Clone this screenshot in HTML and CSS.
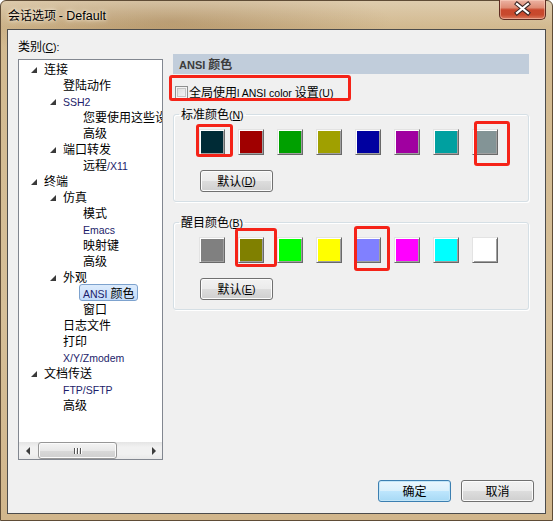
FILE: index.html
```html
<!DOCTYPE html>
<html lang="zh-CN">
<head>
<meta charset="utf-8">
<title>会话选项 - Default</title>
<link rel="stylesheet" href="styles.css">
</head>
<body>
<div class="win">
  <div class="titlebar">
    <span class="title">会话选项 <span class="lt">- Default</span></span>
    <div class="close">
      <svg width="47" height="20" viewBox="0 0 47 20">
        <path d="M18 5 L29 14 M29 5 L18 14" stroke="#3b2624" stroke-width="4.2" stroke-linecap="square" fill="none"/>
        <path d="M18 5 L29 14 M29 5 L18 14" stroke="#ffffff" stroke-width="2.2" stroke-linecap="square" fill="none"/>
      </svg>
    </div>
  </div>
  <div class="client">
    <div class="main">
      <div class="left">
        <div class="cat">类别<span class="l">(<u>C</u>):</span></div>
        <div class="tree">
          <ul class="items">
            <li class="row lv0 open"><span class="tw"></span>连接</li>
            <li class="row lv1">登陆动作</li>
            <li class="row lv1 open"><span class="tw"></span><span class="l nv">SSH2</span></li>
            <li class="row lv2">您要使用这些设置吗</li>
            <li class="row lv2">高级</li>
            <li class="row lv1 open"><span class="tw"></span>端口转发</li>
            <li class="row lv2">远程<span class="l nv">/X11</span></li>
            <li class="row lv0 open"><span class="tw"></span>终端</li>
            <li class="row lv1 open"><span class="tw"></span>仿真</li>
            <li class="row lv2">模式</li>
            <li class="row lv2"><span class="l nv">Emacs</span></li>
            <li class="row lv2">映射键</li>
            <li class="row lv2">高级</li>
            <li class="row lv1 open"><span class="tw"></span>外观</li>
            <li class="row lv2"><span class="sel"><span class="l nv">ANSI </span>颜色</span></li>
            <li class="row lv2">窗口</li>
            <li class="row lv1">日志文件</li>
            <li class="row lv1">打印</li>
            <li class="row lv1"><span class="l nv">X/Y/Zmodem</span></li>
            <li class="row lv0 open"><span class="tw"></span>文档传送</li>
            <li class="row lv1"><span class="l nv">FTP/SFTP</span></li>
            <li class="row lv1">高级</li>
          </ul>
          <div class="hscroll">
            <div class="sbtn"><span class="arr-l"></span></div>
            <div class="track">
              <div class="thumb"><span class="grip"></span><span class="grip"></span><span class="grip"></span></div>
            </div>
            <div class="sbtn"><span class="arr-r"></span></div>
          </div>
        </div>
      </div>
      <div class="right">
        <div class="header"><span class="lb">ANSI </span>颜色</div>
        <div class="check"><span class="cbox"></span><span class="ctext">全局使用<span class="l">l ANSI color </span>设置<span class="l">(<u>U</u>)</span></span></div>
        <fieldset class="group">
          <legend>标准颜色<span class="l">(<u>N</u>)</span></legend>
          <div class="swatches">
            <span class="sw c1"></span><span class="sw c2"></span><span class="sw c3"></span><span class="sw c4"></span>
            <span class="sw c5"></span><span class="sw c6"></span><span class="sw c7"></span><span class="sw c8"></span>
          </div>
          <button class="btn def">默认<span class="l">(<u>D</u>)</span></button>
        </fieldset>
        <fieldset class="group second">
          <legend>醒目颜色<span class="l">(<u>B</u>)</span></legend>
          <div class="swatches">
            <span class="sw b1"></span><span class="sw b2"></span><span class="sw b3"></span><span class="sw b4"></span>
            <span class="sw b5"></span><span class="sw b6"></span><span class="sw b7"></span><span class="sw b8"></span>
          </div>
          <button class="btn def">默认<span class="l">(<u>E</u>)</span></button>
        </fieldset>
      </div>
    </div>
    <div class="actions">
      <button class="btn primary">确定</button>
      <button class="btn">取消</button>
    </div>
  </div>
  <div class="mark m1"></div>
  <div class="mark m2"></div>
  <div class="mark m3"></div>
  <div class="mark m4"></div>
  <div class="mark m5"></div>
</div>
</body>
</html>
```

FILE: styles.css
```css
* { box-sizing: border-box; }
html, body { margin: 0; padding: 0; }
body {
  width: 553px;
  height: 521px;
  overflow: hidden;
  background: #ffffff;
  font-family: "Noto Sans CJK SC", sans-serif;
  font-size: 12px;
  color: #000;
}
.l { font-family: "Liberation Sans", Arial, "Noto Sans CJK SC", sans-serif; font-size: 10.5px; }
.nv { color: #1c1c6a; }
u { text-decoration: underline; }

.win {
  position: relative;
  width: 553px;
  height: 521px;
  display: flex;
  flex-direction: column;
  padding: 0 6px 6px 6px;
  border: 1px solid #5f4c36;
  border-radius: 6px 6px 0 0;
  background:
    linear-gradient(180deg, rgba(255,255,255,0.28) 0, rgba(255,255,255,0) 26px),
    radial-gradient(ellipse 220px 40px at 170px 20px, rgba(160,125,80,0.55), rgba(160,125,80,0) 100%),
    linear-gradient(180deg, #d2b98f 0, #d6bf98 60%, #d1b68c 100%);
}

.titlebar {
  height: 28px;
  display: flex;
  align-items: flex-start;
}
.title {
  margin-left: 1px;
  padding-top: 6px;
  line-height: 16px;
  font-size: 12px;
  text-shadow: 0 0 6px rgba(255,248,235,0.9), 0 0 3px rgba(255,248,235,0.9);
}
.lt { font-family: "Liberation Sans", Arial, sans-serif; font-size: 12.5px; }
.close {
  margin-left: auto;
  margin-top: -1px;
  width: 47px;
  height: 20px;
  border: 1px solid #5e2c22;
  border-top: none;
  border-radius: 0 0 5px 5px;
  background: linear-gradient(180deg, #ecb3a3 0%, #de8c74 40%, #c9472c 52%, #c84a2e 78%, #db7a5e 100%);
  box-shadow: inset 0 0 0 1px rgba(255,220,200,0.45);
  overflow: hidden;
}
.close svg { display: block; margin: -1px 0 0 -1px; }

.client {
  flex: 1;
  display: flex;
  flex-direction: column;
  border: 1px solid #4c4c4c;
  background: #f0f0f0;
}
.main { flex: 1; display: flex; }

.left { padding: 8px 0 0 10px; width: 155px; }
.cat { line-height: 16px; margin-bottom: 4px; }
.tree {
  width: 145px;
  height: 401px;
  border: 1px solid #828790;
  background: #fff;
  display: flex;
  flex-direction: column;
  padding-top: 1px;
}
.items { flex: 1; margin: 0; padding: 0; list-style: none; overflow: hidden; }
.row { height: 16px; line-height: 16px; white-space: nowrap; }
.lv0 { padding-left: 25px; }
.lv1 { padding-left: 44px; }
.lv2 { padding-left: 64px; }
.open.lv0 { padding-left: 12px; }
.open.lv1 { padding-left: 31px; }
.tw {
  display: inline-block;
  vertical-align: top;
  width: 0;
  height: 0;
  margin-top: 6px;
  margin-right: 7px;
  border-left: 6px solid transparent;
  border-bottom: 6px solid #3a3a3a;
}
.sel {
  display: inline-block;
  vertical-align: top;
  margin-left: -4px;
  padding: 0 3px;
  height: 17px;
  margin-top: -1px;
  line-height: 15px;
  border: 1px solid #7da2ce;
  border-radius: 3px;
  background: linear-gradient(180deg, #dcebfc 0%, #c4dcfb 100%);
}

.hscroll {
  height: 17px;
  display: flex;
  background: linear-gradient(180deg, #e4e4e4 0%, #f1f1f1 30%, #f1f1f1 70%, #e9e9e9 100%);
}
.sbtn { width: 17px; display: flex; align-items: center; justify-content: center; }
.arr-l { width: 0; height: 0; border-right: 4px solid #3c3c3c; border-top: 4px solid transparent; border-bottom: 4px solid transparent; }
.arr-r { width: 0; height: 0; border-left: 4px solid #3c3c3c; border-top: 4px solid transparent; border-bottom: 4px solid transparent; }
.track { flex: 1; padding: 0 2px; display: flex; }
.thumb {
  width: 79px;
  height: 17px;
  border: 1px solid #979797;
  border-radius: 3px;
  background: linear-gradient(180deg, #f4f4f4 0%, #e8e8e8 50%, #d9d9d9 51%, #cfcfcf 100%);
  box-shadow: inset 0 0 0 1px #fbfbfb;
  display: flex;
  align-items: center;
  justify-content: center;
  gap: 2px;
}
.grip { width: 1px; height: 6px; background: #555; box-shadow: 1px 0 0 #fff; }

.right { margin-left: 10px; width: 356px; padding-top: 24px; }
.header {
  height: 20px;
  line-height: 20px;
  padding-left: 6px;
  background: #c1cddb;
  font-weight: bold;
  color: #3c3c3c;
}
.lb { font-family: "Liberation Sans", Arial, sans-serif; font-size: 11px; font-weight: bold; }
.check { display: flex; align-items: flex-start; margin-top: 10px; height: 16px; line-height: 16px; }
.cbox {
  width: 13px;
  height: 13px;
  margin: 2px 0 0 2px;
  border: 1px solid #8e8f8f;
  background: linear-gradient(135deg, #dadada 0%, #f7f7f7 100%);
  box-shadow: inset 0 0 0 1px #f4f4f4, inset 0 0 0 2px #c6c6c6;
}
.ctext { margin-left: 1px; }

.group {
  margin: 6px 0 0 0;
  padding: 6px 0 9px 25px;
  min-width: 0;
  border: 1px solid #d5dfe5;
  border-radius: 3px;
  box-shadow: inset 1px 1px 0 #fff, 1px 1px 0 #fff;
}
.group.second { margin-top: 12px; }
.group legend { margin-left: -20px; padding: 0 2px; line-height: 16px; }
.swatches { display: flex; gap: 13px; }
.sw {
  width: 26px;
  height: 26px;
  border: 1px solid;
  border-color: #e3e3e3 #696969 #696969 #e3e3e3;
  box-shadow: inset 1px 1px 0 #ffffff, inset -1px -1px 0 #a0a0a0;
}
.c1 { background: #002b36; }
.c2 { background: #a00000; }
.c3 { background: #00a000; }
.c4 { background: #a0a000; }
.c5 { background: #0000a0; }
.c6 { background: #a000a0; }
.c7 { background: #00a0a0; }
.c8 { background: #839496; }
.b1 { background: #808080; }
.b2 { background: #808000; }
.b3 { background: #00ff00; }
.b4 { background: #ffff00; }
.b5 { background: #8080ff; }
.b6 { background: #ff00ff; }
.b7 { background: #00ffff; }
.b8 { background: #ffffff; }

.btn {
  width: 73px;
  height: 22px;
  padding: 0;
  border: 1px solid #707070;
  border-radius: 3px;
  background: linear-gradient(180deg, #f2f2f2 0%, #ebebeb 49%, #dddddd 50%, #cfcfcf 100%);
  box-shadow: inset 0 0 0 1px #fcfcfc;
  font-family: "Noto Sans CJK SC", sans-serif;
  font-size: 12px;
  line-height: 18px;
  color: #000;
  display: flex;
  align-items: center;
  justify-content: center;
}
.btn.def { margin: 15px 0 0 1px; }
.btn.primary {
  border-color: #3c7fb1;
  background: linear-gradient(180deg, #eaf6fd 0%, #d9f0fc 49%, #bee6fd 50%, #a7d9f5 100%);
  box-shadow: inset 0 0 0 1px #c3e6f8;
}
.actions { display: flex; justify-content: flex-end; gap: 10px; padding: 0 11px 11px 0; }

.mark {
  position: absolute;
  border: 3px solid #f52318;
  border-radius: 3px;
}
.m1 { left: 168px; top: 74px; width: 182px; height: 26px; }
.m2 { left: 195px; top: 123px; width: 37px; height: 33px; }
.m3 { left: 473px; top: 120px; width: 36px; height: 45px; }
.m4 { left: 234px; top: 227px; width: 42px; height: 39px; }
.m5 { left: 353px; top: 225px; width: 36px; height: 45px; }
```
